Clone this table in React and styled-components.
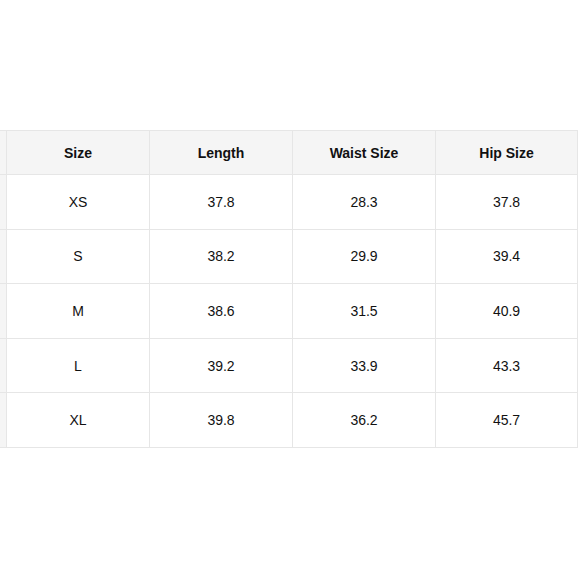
import React from 'react';
import styled, { createGlobalStyle } from 'styled-components';

const GlobalStyle = createGlobalStyle`
  html, body {
    margin: 0;
    padding: 0;
    background: #fff;
  }
  body {
    font-family: "Liberation Sans", Arial, Helvetica, sans-serif;
    color: #111;
    overflow: hidden;
  }
`;

const Page = styled.div`
  width: 580px;
  height: 580px;
  padding-top: 130px;
  box-sizing: border-box;
  overflow: hidden;
`;

// table is wider than the viewport on the left, the first column is cut off
const Table = styled.div`
  display: grid;
  grid-template-columns: 100px repeat(3, 143px) 142px;
  grid-template-rows: 44px repeat(5, 54.6px);
  margin-left: -94px;
  width: max-content;
  border-top: 1px solid #e6e6e6;
  border-left: 1px solid #e6e6e6;
`;

const Cell = styled.div`
  display: flex;
  align-items: center;
  justify-content: center;
  box-sizing: border-box;
  border-right: 1px solid #e6e6e6;
  border-bottom: 1px solid #e6e6e6;
  font-size: 14px;
  font-weight: ${props => (props.head ? 700 : 400)};
  background: ${props => (props.head || props.side ? '#f5f5f5' : '#fff')};
`;

const headers = ['Size', 'Length', 'Waist Size', 'Hip Size'];

const rows = [
  ['XS', '37.8', '28.3', '37.8'],
  ['S', '38.2', '29.9', '39.4'],
  ['M', '38.6', '31.5', '40.9'],
  ['L', '39.2', '33.9', '43.3'],
  ['XL', '39.8', '36.2', '45.7'],
];

export default function App() {
  return (
    <>
      <GlobalStyle />
      <Page>
        <Table>
          <Cell head />
          {headers.map(h => (
            <Cell head key={h}>{h}</Cell>
          ))}
          {rows.map(row => (
            <React.Fragment key={row[0]}>
              <Cell side />
              {row.map((v, i) => (
                <Cell key={i}>{v}</Cell>
              ))}
            </React.Fragment>
          ))}
        </Table>
      </Page>
    </>
  );
}
